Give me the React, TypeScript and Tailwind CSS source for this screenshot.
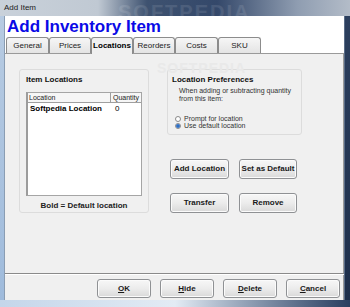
const tabs = [
  { label: "General", w: "w-[43px]" },
  { label: "Prices", w: "w-[42px]" },
  { label: "Locations", w: "w-[42px]", active: true },
  { label: "Reorders", w: "w-[42px]" },
  { label: "Costs", w: "w-[43px]" },
  { label: "SKU", w: "w-[43px]" },
];

function Btn({ children, className = "" }: { children: React.ReactNode; className?: string }) {
  return (
    <div
      className={`flex items-center justify-center rounded-[3px] border border-[#8f9194] bg-gradient-to-b from-[#f7f7f7] via-[#ececec] to-[#d9d9d9] text-[8px] font-bold text-[#1a1a1a] shadow-[inset_0_0_0_1px_#fbfbfb] ${className}`}
    >
      {children}
    </div>
  );
}

function Radio({ checked, label }: { checked?: boolean; label: string }) {
  return (
    <div className="flex h-[7px] items-center gap-[3px]">
      <div className="flex h-[6px] w-[6px] items-center justify-center rounded-full border border-[#8a8a8a] bg-white">
        {checked && <div className="h-[4px] w-[4px] rounded-full bg-[#2f6fc4]" />}
      </div>
      <span className="leading-[7px]">{label}</span>
    </div>
  );
}

export default function App() {
  return (
    <div className="flex h-[307px] w-[350px] flex-col overflow-hidden font-['Liberation_Sans',Arial,sans-serif] text-[8px] text-[#222]">
      {/* title bar */}
      <div className="relative flex h-[16px] items-center bg-[linear-gradient(90deg,#c9d1da_0%,#c0c9d3_28%,#3e5270_42%,#34486a_62%,#8f9db1_85%,#b3bcc8_100%)] pl-[4px] text-[8px] text-[#1b1b1b]">
        <span className="relative z-10">Add Item</span>
        <span className="absolute left-[118px] top-[-3px] text-[20px] font-bold tracking-[2px] text-white/10">SOFTPEDIA</span>
      </div>

      <div className="flex flex-1">
        <div className="w-[4px] bg-gradient-to-b from-[#b7cbe2] to-[#9fbbdc]" />

        <div className="flex flex-1 flex-col border-l border-[#8a9db3] bg-[#f0f0f0]">
          {/* header */}
          <div className="flex h-[21px] items-center bg-white pl-[2px] text-[17px] leading-none font-bold text-[#0a0ae6]">
            Add Inventory Item
          </div>

          {/* tabs */}
          <div className="flex h-[16px] items-end bg-white pl-[1px]">
            {tabs.map((t) => (
              <div
                key={t.label}
                className={`flex h-[16px] items-center justify-center rounded-t-[3px] border border-b-0 border-[#8c8c8c] ${t.w} ${
                  t.active ? "z-10 mb-[-1px] h-[17px] bg-[#f0f0f0] font-bold text-black" : "bg-gradient-to-b from-[#f6f6f6] to-[#e4e4e4]"
                }`}
              >
                {t.label}
              </div>
            ))}
          </div>

          {/* tab page */}
          <div className="relative flex flex-1 gap-[18px] border-t border-r border-[#9a9a9a] bg-[#f0f0f0] pl-[14px] pt-[15px]">
            <span className="absolute left-[152px] top-[4px] text-[14px] font-bold tracking-[1px] text-[#e9e9e9]">SOFTPEDIA</span>

            {/* item locations */}
            <div className="relative flex h-[144px] w-[130px] flex-col rounded-[3px] border border-[#dcdcdc] px-[6px] pt-[4px]">
              <div className="font-bold text-[#111]">Item Locations</div>
              <div className="mt-[6px] flex h-[105px] flex-col border border-[#a5a5a5] border-l-2 border-l-[#9c9c9c] bg-white">
                <div className="flex h-[10px] border-b border-[#9f9f9f] bg-[#f6f6f6] text-[7px] leading-[9px]">
                  <div className="w-[83px] border-r border-[#9f9f9f] pl-[1px]">Location</div>
                  <div className="flex-1 pl-[2px]">Quantity</div>
                </div>
                <div className="flex leading-[11px] font-bold text-black">
                  <div className="w-[84px] pl-[2px]">Softpedia Location</div>
                  <div className="pl-[3px] font-normal">0</div>
                </div>
              </div>
              <div className="mt-[4px] text-center font-bold text-[#222]">Bold = Default location</div>
            </div>

            {/* preferences */}
            <div className="flex w-[135px] flex-col">
              <div className="flex h-[66px] flex-col rounded-[3px] border border-[#dcdcdc] pl-[4px] pt-[4px]">
                <div className="font-bold text-[#111]">Location Preferences</div>
                <div className="mt-[1px] whitespace-nowrap pl-[7px] text-[7px] leading-[8px] text-[#333]">
                  When adding or subtracting quantity
                  <br />
                  from this item:
                </div>
                <div className="mt-[12px] flex flex-col pl-[3px] text-[7px] text-[#333]">
                  <Radio label="Prompt for location" />
                  <Radio checked label="Use default location" />
                </div>
              </div>

              <div className="mt-[24px] grid grid-cols-[59px_58px] gap-x-[10px] gap-y-[14px] pl-[3px]">
                <Btn className="h-[20px]">Add Location</Btn>
                <Btn className="h-[20px]">Set as Default</Btn>
                <Btn className="h-[20px]">Transfer</Btn>
                <Btn className="h-[20px]">Remove</Btn>
              </div>
            </div>
          </div>

          {/* separator */}
          <div className="h-[2px] border-t border-[#8a8a8a] bg-[#ffffff]" />

          {/* bottom buttons */}
          <div className="flex h-[25px] justify-end gap-[9px] border-r border-[#9a9a9a] pr-[3px] pt-[4px]">
            <Btn className="h-[19px] w-[54px]">
              <span className="underline">O</span>K
            </Btn>
            <Btn className="h-[19px] w-[54px]">
              <span className="underline">H</span>ide
            </Btn>
            <Btn className="h-[19px] w-[54px]">
              <span className="underline">D</span>elete
            </Btn>
            <Btn className="h-[19px] w-[54px]">
              <span className="underline">C</span>ancel
            </Btn>
          </div>
        </div>

        <div className="w-[6px] border-l border-[#5a6d88] bg-gradient-to-b from-[#2c3f5e] to-[#1e2f4b]" />
      </div>

      {/* bottom frame */}
      <div className="h-[7px] bg-gradient-to-r from-[#c4d6ea] via-[#e3ebf4] to-[#2a3f60]" />
    </div>
  );
}
